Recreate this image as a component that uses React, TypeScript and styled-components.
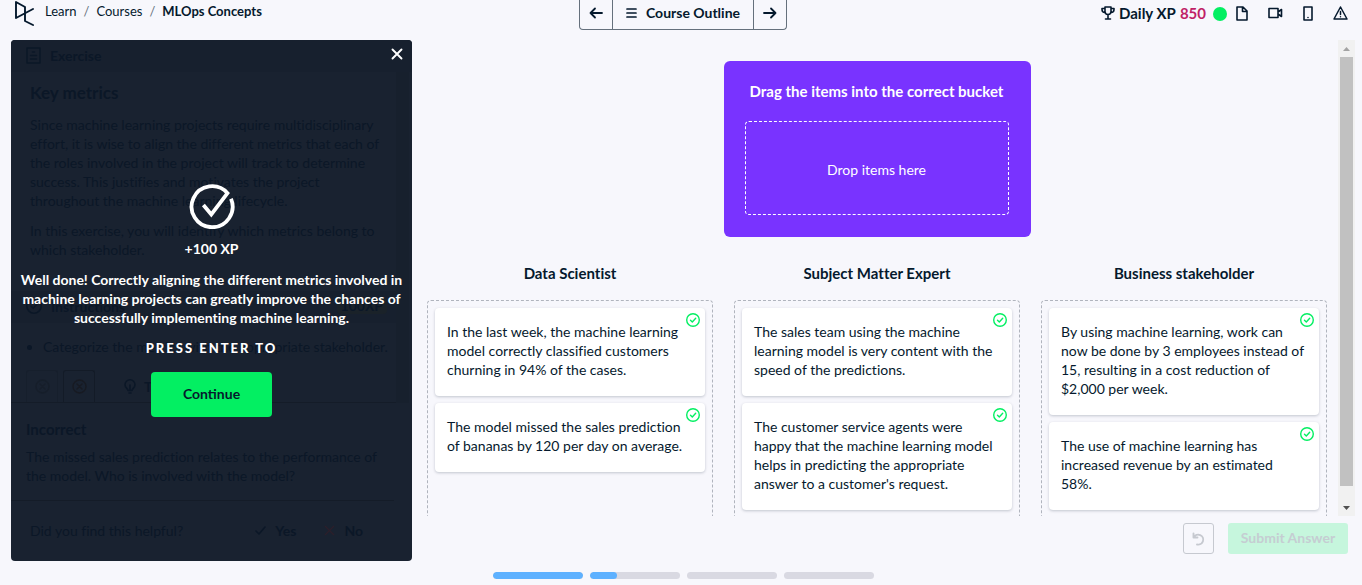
import React from "react";
import styled, { createGlobalStyle } from "styled-components";

const ink = "#05192d";
const ghost = "#0b1727";
const canvas = "#f7f7fc";
const green = "#03ef62";

const GlobalStyle = createGlobalStyle`
  * { box-sizing: border-box; }
  body { margin: 0; background: ${canvas}; font-variant-ligatures: none; }
  body, button { font-family: Lato, "Liberation Sans", sans-serif; }
  h2, h3, p, ul, ol { margin: 0; padding: 0; }
  button { cursor: pointer; }
  svg { display: block; flex: none; }
`;

const Page = styled.div`
  height: 100vh;
  display: flex;
  flex-direction: column;
  padding: 0 7px 0 11px;
  color: ${ink};
  font-size: 14px;
  line-height: 19px;
  overflow: hidden;
`;

/* ---------- header ---------- */

const Header = styled.header`
  flex: none;
  height: 40px;
  display: grid;
  grid-template-columns: 1fr auto 1fr;
  align-items: start;
`;

const Crumbs = styled.nav`
  display: flex;
  align-items: center;
  gap: 10px;
  padding: 1px 0 0 4px;
`;

const CrumbList = styled.ol`
  display: flex;
  gap: 7px;
  list-style: none;
  padding-bottom: 4px;
  font-size: 13px;
`;

const CrumbLink = styled.a<{ $current?: boolean }>`
  color: ${ink};
  text-decoration: none;
  font-weight: ${(p) => (p.$current ? 700 : 400)};
`;

const Slash = styled.span`
  color: #65707c;
`;

const OutlineNav = styled.div`
  display: flex;
  height: 30px;
  border: 1px solid #65707c;
  border-top: 0;
  border-radius: 0 0 4px 4px;
`;

const OutlineButton = styled.button<{ $wide?: boolean }>`
  display: flex;
  align-items: center;
  justify-content: center;
  gap: 9px;
  width: ${(p) => (p.$wide ? "142px" : "32px")};
  padding: 0 0 4px;
  border: 0 solid #65707c;
  border-width: ${(p) => (p.$wide ? "0 1px" : "0")};
  background: transparent;
  color: ${ink};
  font-size: 14px;
  font-weight: 700;
`;

const Status = styled.div`
  display: flex;
  align-items: center;
  justify-content: flex-end;
  height: 26px;
  padding-right: 7px;
`;

const Xp = styled.div`
  display: flex;
  align-items: center;
  gap: 4px;
  font-size: 15px;
  font-weight: 700;
`;

const XpValue = styled.span`
  color: #c01f67;
`;

const Dot = styled.span`
  width: 14px;
  height: 14px;
  margin: 2px 9px 0 7px;
  border-radius: 50%;
  background: ${green};
`;

const Tools = styled.div`
  display: flex;
  align-items: center;
  gap: 20px;
`;

const IconButton = styled.button`
  display: flex;
  padding: 0;
  border: 0;
  background: transparent;
  color: inherit;
`;

/* ---------- body ---------- */

const Body = styled.main`
  flex: 1;
  min-height: 0;
  display: flex;
`;

const Sidebar = styled.aside`
  position: relative;
  flex: 0 1 401px;
  display: flex;
  flex-direction: column;
  border-radius: 4px;
  overflow: hidden;
  background: #192230;
  color: ${ghost};
`;

const SideBar = styled.div`
  display: flex;
  align-items: center;
  gap: 9px;
  height: 32px;
  padding: 0 9px 2px 15px;
  background: #17202e;
  font-weight: 700;
`;

const SideMain = styled.div`
  display: flex;
`;

const SideColumn = styled.div`
  flex: 1;
  min-width: 0;
`;

const SideTrack = styled.div`
  width: 13px;
  margin-right: 3px;
  background: #17202d;
`;

const Prose = styled.div`
  height: 219px;
  padding: 10px 19px 0;
`;

const SideTitle = styled.h2`
  font-size: 17px;
  line-height: 22px;
  font-weight: 700;
`;

const Para = styled.p`
  margin-top: 11px;
  white-space: pre;
`;

const XpTag = styled.span`
  margin-left: auto;
  padding: 0 4px;
  border-radius: 4px;
  background: #1a2229;
  line-height: 16px;
`;

const Bullets = styled.ul`
  height: 47px;
  padding: 14px 0 0 32px;
  white-space: nowrap;
`;

const Tabs = styled.div`
  display: flex;
  align-items: stretch;
  gap: 5px;
  height: 33px;
  padding-left: 15px;
  border-bottom: 1px solid #141c28;
`;

const Tab = styled.div<{ $dim?: boolean }>`
  display: flex;
  align-items: center;
  justify-content: center;
  width: 32px;
  border: 1px solid ${(p) => (p.$dim ? "#161f2c" : "#131b27")};
  border-bottom: 0;
  border-radius: 3px 3px 0 0;
  color: ${(p) => (p.$dim ? "#161e2a" : "#171a22")};
`;

const Hint = styled.div`
  display: flex;
  align-items: center;
  gap: 8px;
  padding-left: 24px;
  font-weight: 700;
`;

const Feedback = styled.div`
  height: 98px;
  margin-right: 18px;
  padding: 15px 15px 0;
  border-bottom: 1px solid #141c28;
`;

const FeedbackTitle = styled.h3`
  font-size: 15px;
  line-height: 22px;
  font-weight: 700;
`;

const FeedbackText = styled.p`
  margin-top: 7px;
  white-space: pre;
`;

const Helpful = styled.div`
  display: flex;
  align-items: center;
  height: 59px;
  padding: 0 49px 0 19px;
`;

const Votes = styled.div`
  display: flex;
  gap: 28px;
  margin-left: auto;
  font-weight: 700;
`;

const Vote = styled.span`
  display: flex;
  align-items: center;
  gap: 9px;
`;

const Overlay = styled.div`
  position: absolute;
  inset: 0;
  display: flex;
  flex-direction: column;
  align-items: center;
  justify-content: center;
  padding-bottom: 2px;
  color: #fff;
  font-weight: 700;
  text-align: center;
`;

const CloseButton = styled(IconButton)`
  position: absolute;
  top: 8px;
  right: 9px;
`;

const Earned = styled.p`
  margin-top: 10px;
`;

const Praise = styled.p`
  margin-top: 12px;
  white-space: pre;
`;

const Press = styled.p`
  margin-top: 12px;
  font-size: 13px;
  font-weight: 900;
  letter-spacing: 2px;
`;

const ContinueButton = styled.button`
  width: 121px;
  height: 45px;
  margin-top: 14px;
  padding-bottom: 3px;
  border: 0;
  border-radius: 4px;
  background: ${green};
  color: ${ink};
  font-size: 14px;
  font-weight: 700;
`;

/* ---------- workspace ---------- */

const Work = styled.section`
  flex: 1;
  min-width: 0;
  display: flex;
  flex-direction: column;
`;

const Scroller = styled.div`
  flex: 1;
  min-height: 0;
  display: flex;
`;

const Board = styled.div`
  flex: 1;
  min-width: 0;
  display: flex;
  flex-direction: column;
  padding: 21px 11px 0 15px;
  overflow: hidden;
`;

const Source = styled.div`
  flex: none;
  align-self: center;
  display: flex;
  flex-direction: column;
  gap: 19px;
  width: 307px;
  height: 176px;
  padding: 20px 22px 22px 21px;
  border-radius: 6px;
  background: #7933ff;
  color: #fff;
  text-align: center;
`;

const SourceTitle = styled.h2`
  font-size: 15px;
  line-height: 21px;
  font-weight: 700;
  white-space: nowrap;
`;

const DropZone = styled.div`
  flex: 1;
  display: flex;
  align-items: center;
  justify-content: center;
  padding-top: 3px;
  border: 1px dashed #fff;
  border-radius: 4px;
`;

const Buckets = styled.div`
  flex: none;
  display: grid;
  grid-template-columns: repeat(3, 1fr);
  gap: 21px;
  padding-top: 25px;
`;

const Bucket = styled.section`
  display: flex;
  flex-direction: column;
`;

const BucketTitle = styled.h3`
  margin-bottom: 16px;
  font-size: 15px;
  line-height: 22px;
  font-weight: 700;
  text-align: center;
`;

const BucketBox = styled.div`
  flex: 1;
  display: flex;
  flex-direction: column;
  gap: 7px;
  min-height: 260px;
  padding: 7px;
  border: 1px dashed #b0b4bd;
  border-radius: 4px;
`;

const Card = styled.article`
  position: relative;
  padding: 14px 12px 17px;
  border-radius: 4px;
  background: #fff;
  box-shadow: 0 1px 3px rgba(5, 25, 45, 0.22);
  white-space: pre-line;
`;

const Badge = styled.span`
  position: absolute;
  top: 5px;
  right: 5px;
  color: ${green};
`;

const Rail = styled.div`
  display: flex;
  flex-direction: column;
  width: 17px;
  background: #f1f1f1;
`;

const RailEnd = styled.div`
  display: flex;
  align-items: center;
  justify-content: center;
  height: 17px;
`;

const RailTrack = styled.div`
  flex: 1;
  padding: 0 2px;
`;

const RailThumb = styled.div`
  height: 97%;
  background: #c1c1c1;
`;

const Actions = styled.div`
  flex: none;
  display: flex;
  justify-content: flex-end;
  gap: 14px;
  height: 45px;
  padding: 7px 7px 7px 0;
`;

const ResetButton = styled.button`
  display: flex;
  align-items: center;
  justify-content: center;
  width: 31px;
  padding: 0;
  border: 1px solid #c6c9d0;
  border-radius: 3px;
  background: transparent;
  color: #c6c9d0;
`;

const SubmitButton = styled.button`
  width: 120px;
  padding: 0 0 3px;
  border: 0;
  border-radius: 3px;
  background: #c6f6dd;
  color: #c5cdd2;
  font-size: 14px;
  font-weight: 700;
`;

const Steps = styled.footer`
  flex: none;
  display: flex;
  justify-content: center;
  gap: 7px;
  height: 24px;
  padding-top: 11px;
`;

const Step = styled.div`
  width: 90px;
  height: 7px;
  border-radius: 4px;
  background: #d9d9e2;
  overflow: hidden;
`;

const StepFill = styled.div`
  height: 100%;
  border-radius: 4px;
  background: #5eb1ff;
`;

/* ---------- icons ---------- */

type IconProps = { w: number; h: number; sw?: number; children: React.ReactNode };

const Icon = ({ w, h, sw = 2, children }: IconProps) => (
  <svg width={w} height={h} viewBox={`0 0 ${w} ${h}`} fill="none" stroke="currentColor" strokeWidth={sw} strokeLinejoin="round" strokeLinecap="round" aria-hidden="true">
    {children}
  </svg>
);

const Logo = () => (
  <Icon w={20} h={25} sw={1.9}>
    <path d="M1 17V1l9 5v14l8 4M1 17l17-9" />
  </Icon>
);
const ArrowLeft = () => (
  <Icon w={14} h={12} sw={1.8}><path d="M13 6H1.500M6 1.500L1.500 6 6 10.500" /></Icon>
);
const ArrowRight = () => (
  <Icon w={14} h={12} sw={1.8}><path d="M1 6h11.500M8 1.500L12.500 6 8 10.500" /></Icon>
);
const Menu = () => (
  <Icon w={11} h={10} sw={1.7}><path d="M1 1h9M1 5h9M1 9h9" /></Icon>
);
const Trophy = () => (
  <Icon w={14} h={14} sw={1.6}>
    <path d="M4 1h6v4.500a3 3 0 0 1-6 0zM4 2.500H1v1a3 3 0 0 0 3 3M10 2.500h3v1a3 3 0 0 1-3 3M7 9v4M4.500 13h5" />
  </Icon>
);
const Doc = () => (
  <Icon w={12} h={15} sw={1.6}><path d="M1 1h6l4 4v9H1zM6.500 1v4.500H11" /></Icon>
);
const Video = () => (
  <Icon w={15} h={12} sw={1.6}><path d="M1 1.500h9v9H1zM10 5l3.500-2.500v7L10 7" /></Icon>
);
const Phone = () => (
  <Icon w={10} h={15} sw={1.6}><path d="M1 1h8v13H1zM5 11.500h0" /></Icon>
);
const Warning = () => (
  <Icon w={15} h={14} sw={1.5}><path d="M7.500 1l6.500 12H1zM7.500 5.500v3M7.500 10.800v0" /></Icon>
);
const Close = () => (
  <Icon w={12} h={12} sw={1.9}><path d="M1.500 1.500l9 9M10.500 1.500l-9 9" /></Icon>
);
const Sheet = () => (
  <Icon w={15} h={17} sw={1.5}>
    <path d="M1 1h13v15H1zM6.500 5h2M4.500 8.500h6M4.500 12h6" />
  </Icon>
);
const RoundCheck = ({ size, sw }: { size: number; sw: number }) => (
  <svg width={size} height={size} viewBox="0 0 14 14" fill="none" stroke="currentColor" strokeWidth={sw} strokeLinejoin="round" strokeLinecap="round" aria-hidden="true">
    <circle cx="7" cy="7" r="6.300" />
    <path d="M4.500 7.300l1.800 1.700 3.400-3.700" />
  </svg>
);
const RoundCross = () => (
  <Icon w={15} h={15} sw={1.4}>
    <circle cx="7.500" cy="7.500" r="6.500" />
    <path d="M5 5l5 5M10 5l-5 5" />
  </Icon>
);
const Bulb = () => (
  <Icon w={12} h={15} sw={1.6}>
    <path d="M4 11.500C4 9.500 1 9 1 5.800a5 5 0 0 1 10 0C11 9 8 9.500 8 11.500zM6 6v5M5 14h2" />
  </Icon>
);
const Tick = () => (
  <Icon w={11} h={9} sw={1.6}><path d="M1 5l3 3 6-7" /></Icon>
);
const Cross = () => (
  <svg width="11" height="11" viewBox="0 0 11 11" fill="none" stroke="#2a1f2b" strokeWidth="1.500" aria-hidden="true">
    <path d="M1 1l9 9M10 1l-9 9" />
  </svg>
);
const BigCheck = () => (
  <svg width="46" height="46" viewBox="0 0 46 46" fill="none" stroke="#fff" strokeWidth="3.800" aria-hidden="true">
    <path d="M42 15.800A20.500 20.500 0 1 1 38.500 10.200L22.300 31.500 14.400 22" />
  </svg>
);
const Undo = () => (
  <Icon w={13} h={14} sw={1.9}>
    <path d="M1.500 1.500v4H5.500M1.800 5.300A5 5 0 1 1 5 12.500" />
  </Icon>
);
const Caret = ({ down, color }: { down?: boolean; color: string }) => (
  <svg width="7" height="4" viewBox="0 0 7 4" fill={color} aria-hidden="true">
    <path d={down ? "M0 0h7L3.500 4z" : "M0 4h7L3.500 0z"} />
  </svg>
);

/* ---------- data ---------- */

const buckets = [
  {
    title: "Data Scientist",
    cards: [
      "In the last week, the machine learning\nmodel correctly classified customers\nchurning in 94% of the cases.",
      "The model missed the sales prediction\nof bananas by 120 per day on average.",
    ],
  },
  {
    title: "Subject Matter Expert",
    cards: [
      "The sales team using the machine\nlearning model is very content with the\nspeed of the predictions.",
      "The customer service agents were\nhappy that the machine learning model\nhelps in predicting the appropriate\nanswer to a customer's request.",
    ],
  },
  {
    title: "Business stakeholder",
    cards: [
      "By using machine learning, work can\nnow be done by 3 employees instead of\n15, resulting in a cost reduction of\n$2,000 per week.",
      "The use of machine learning has\nincreased revenue by an estimated\n58%.",
    ],
  },
];

const steps = [100, 31, 0, 0];

export default function App() {
  return (
    <Page>
      <GlobalStyle />
      <Header>
        <Crumbs aria-label="Breadcrumb">
          <Logo />
          <CrumbList>
            <li><CrumbLink href="#learn">Learn</CrumbLink></li>
            <Slash as="li">/</Slash>
            <li><CrumbLink href="#courses">Courses</CrumbLink></li>
            <Slash as="li">/</Slash>
            <li><CrumbLink href="#mlops" $current>MLOps Concepts</CrumbLink></li>
          </CrumbList>
        </Crumbs>
        <OutlineNav>
          <OutlineButton aria-label="Previous"><ArrowLeft /></OutlineButton>
          <OutlineButton $wide><Menu />Course Outline</OutlineButton>
          <OutlineButton aria-label="Next"><ArrowRight /></OutlineButton>
        </OutlineNav>
        <Status>
          <Xp><Trophy /><span>Daily XP</span><XpValue>850</XpValue></Xp>
          <Dot />
          <Tools>
            <IconButton aria-label="Slides"><Doc /></IconButton>
            <IconButton aria-label="Video"><Video /></IconButton>
            <IconButton aria-label="Mobile"><Phone /></IconButton>
            <IconButton aria-label="Report issue"><Warning /></IconButton>
          </Tools>
        </Status>
      </Header>

      <Body>
        <Sidebar>
          <SideBar><Sheet />Exercise</SideBar>
          <SideMain>
            <SideColumn>
              <Prose>
                <SideTitle>Key metrics</SideTitle>
                <Para>{"Since machine learning projects require multidisciplinary\neffort, it is wise to align the different metrics that each of\nthe roles involved in the project will track to determine\nsuccess. This justifies and motivates the project\nthroughout the machine learning lifecycle."}</Para>
                <Para>{"In this exercise, you will identify which metrics belong to\nwhich stakeholder."}</Para>
              </Prose>
              <SideBar><RoundCheck size={16} sw={1.4} />Instructions<XpTag>100XP</XpTag></SideBar>
              <Bullets><li>Categorize the metrics with the appropriate stakeholder.</li></Bullets>
              <Tabs>
                <Tab $dim><RoundCross /></Tab>
                <Tab><RoundCross /></Tab>
                <Hint><Bulb />Take Hint</Hint>
              </Tabs>
            </SideColumn>
            <SideTrack />
          </SideMain>
          <Feedback>
            <FeedbackTitle>Incorrect</FeedbackTitle>
            <FeedbackText>{"The missed sales prediction relates to the performance of\nthe model. Who is involved with the model?"}</FeedbackText>
          </Feedback>
          <Helpful>
            Did you find this helpful?
            <Votes>
              <Vote><Tick />Yes</Vote>
              <Vote><Cross />No</Vote>
            </Votes>
          </Helpful>
          <Overlay>
            <CloseButton aria-label="Close"><Close /></CloseButton>
            <BigCheck />
            <Earned>+100 XP</Earned>
            <Praise>{"Well done! Correctly aligning the different metrics involved in\nmachine learning projects can greatly improve the chances of\nsuccessfully implementing machine learning."}</Praise>
            <Press>PRESS ENTER TO</Press>
            <ContinueButton>Continue</ContinueButton>
          </Overlay>
        </Sidebar>

        <Work>
          <Scroller>
            <Board>
              <Source>
                <SourceTitle>Drag the items into the correct bucket</SourceTitle>
                <DropZone>Drop items here</DropZone>
              </Source>
              <Buckets>
                {buckets.map((b) => (
                  <Bucket key={b.title}>
                    <BucketTitle>{b.title}</BucketTitle>
                    <BucketBox>
                      {b.cards.map((text) => (
                        <Card key={text}>
                          {text}
                          <Badge><RoundCheck size={14} sw={1.4} /></Badge>
                        </Card>
                      ))}
                    </BucketBox>
                  </Bucket>
                ))}
              </Buckets>
            </Board>
            <Rail>
              <RailEnd><Caret color="#a3a3a3" /></RailEnd>
              <RailTrack><RailThumb /></RailTrack>
              <RailEnd><Caret down color="#505050" /></RailEnd>
            </Rail>
          </Scroller>
          <Actions>
            <ResetButton aria-label="Reset"><Undo /></ResetButton>
            <SubmitButton disabled>Submit Answer</SubmitButton>
          </Actions>
        </Work>
      </Body>

      <Steps>
        {steps.map((done, i) => (
          <Step key={i}>{done > 0 && <StepFill style={{ width: `${done}%` }} />}</Step>
        ))}
      </Steps>
    </Page>
  );
}
